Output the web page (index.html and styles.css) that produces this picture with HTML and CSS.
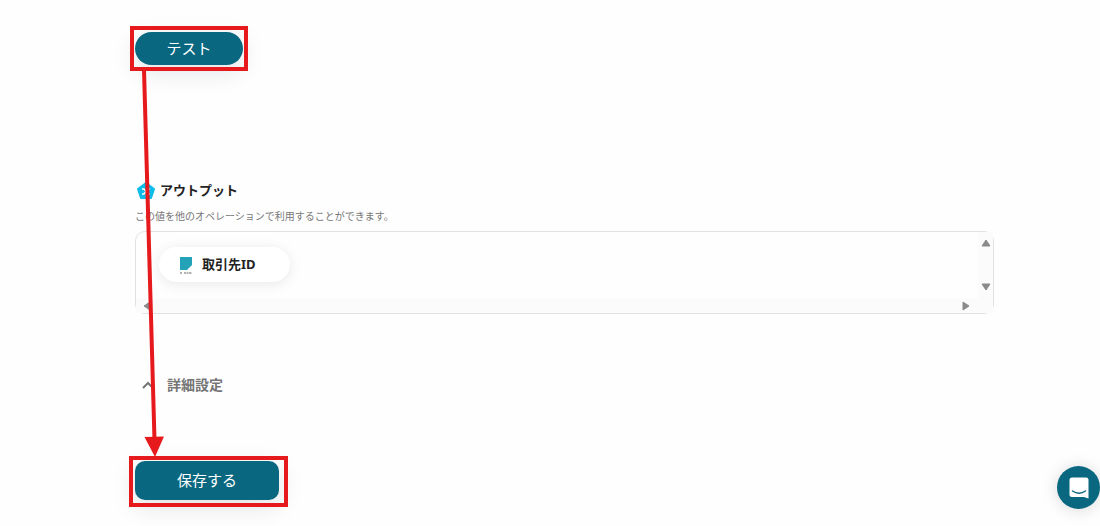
FILE: index.html
```html
<!DOCTYPE html>
<html lang="ja">
<head>
    <meta charset="UTF-8">
    <meta name="viewport" content="width=device-width, initial-scale=1.0">
    <title>オペレーション設定</title>
    <link rel="stylesheet" href="styles.css">
</head>
<body>

<main class="container">
    <button type="button" class="btn btn-test">テスト</button>

    <section class="output">
        <h2 class="output-title">
            <svg class="output-icon" viewBox="0 0 20 20" aria-hidden="true">
                <path d="M11 3 L19 9 L16 18 L6 18 L3 9 Z" fill="#0fbbe8" stroke="#0fbbe8" stroke-width="2" stroke-linejoin="round"/>
                <path d="M7 9 H9 L13 14 H15 M7 14 H9 L13 9 H15" fill="none" stroke="#fff" stroke-width="1.5"/>
            </svg>
            アウトプット
        </h2>
        <p class="output-text">この値を他のオペレーションで利用することができます。</p>
        <div class="output-box">
            <div class="output-list">
                <div class="chip">
                    <svg class="chip-icon" viewBox="0 0 14 18" aria-hidden="true">
                        <path d="M1 1 H13 V9 L8 14 H1 Z" fill="#24a3b8"/>
                        <path d="M1 17 H3 M5 17 H13" stroke="#666" stroke-dasharray="2 .5"/>
                    </svg>
                    <span class="chip-name">取引先ID</span>
                </div>
            </div>
            <div class="scroll scroll-y">
                <svg class="arrow" viewBox="0 0 10 8" aria-hidden="true"><path d="M5 1 L9 7 H1 Z"/></svg>
                <svg class="arrow" viewBox="0 0 10 8" aria-hidden="true"><path d="M1 1 H9 L5 7 Z"/></svg>
            </div>
            <div class="scroll scroll-x">
                <svg class="arrow arrow-side" viewBox="0 0 8 10" aria-hidden="true"><path d="M7 1 V9 L1 5 Z"/></svg>
                <svg class="arrow arrow-side" viewBox="0 0 8 10" aria-hidden="true"><path d="M1 1 L7 5 L1 9 Z"/></svg>
            </div>
        </div>
    </section>

    <button type="button" class="detail">
        <svg class="detail-icon" viewBox="0 0 12 8" aria-hidden="true">
            <path d="M1 7 L6 2 L11 7" fill="none" stroke="#757575" stroke-width="2"/>
        </svg>
        詳細設定
    </button>

    <button type="button" class="btn btn-save">保存する</button>
</main>

<!-- 操作手順の赤枠と矢印 -->
<svg class="guide" width="300" height="526" aria-hidden="true">
    <rect x="132" y="28" width="114" height="41"/>
    <rect x="131" y="458" width="155" height="47"/>
    <path d="M144 70 L154.5 440"/>
    <path class="guide-head" d="M144.5 437 L164 436.5 L155 457 Z"/>
</svg>

<button type="button" class="chat" aria-label="チャット">
    <svg class="chat-icon" viewBox="0 0 20 22" aria-hidden="true">
        <path d="M3 0.5 H17 Q19.5 0.5 19.5 3 V21.5 L15 20 H3 Q0.5 20 0.5 17.5 V3 Q0.5 0.5 3 0.5 Z" fill="#fff"/>
        <path d="M3.5 14 Q10 18.5 16.5 14" fill="none" stroke="#0a6780" stroke-width="1.5" stroke-linecap="round"/>
    </svg>
</button>

</body>
</html>
```
FILE: styles.css
```css
* {
    box-sizing: border-box;
}
body {
    margin: 0;
    background: #fefefe;
    color: #222;
    font-family: "Noto Sans", "Noto Sans CJK JP", sans-serif;
}
button {
    border: none;
    padding: 0;
    font-family: inherit;
    cursor: pointer;
}
.container {
    display: flex;
    flex-direction: column;
    align-items: flex-start;
    padding: 32px 106px 26px 135px;
}
.btn {
    padding-bottom: 2px;
    background: #0a6780;
    color: #fff;
    font-size: 15px;
    line-height: 20px;
    box-shadow: 0 6px 24px rgba(0, 30, 50, 0.13);
}
.btn-test {
    width: 108px;
    height: 33px;
    border-radius: 17px;
}
.btn-save {
    width: 144px;
    height: 39px;
    margin-top: 66px;
    border-radius: 10px;
}
.output {
    width: 100%;
    margin-top: 115px;
}
.output-title {
    display: flex;
    align-items: center;
    gap: 5px;
    margin: 0;
    font-size: 13px;
    line-height: 20px;
}
.output-icon {
    width: 20px;
    height: 20px;
}
.output-text {
    margin: 8px 0 7px;
    color: #777;
    font-size: 10px;
    line-height: 16px;
}
.output-box {
    display: grid;
    grid-template-columns: 1fr 15px;
    grid-template-rows: 66px 15px;
    border: 1px solid #e2e2e2;
    border-radius: 10px;
}
.output-list {
    padding: 15px 23px;
}
.chip {
    display: inline-flex;
    align-items: center;
    gap: 9px;
    height: 35px;
    padding: 0 34px 0 20px;
    border-radius: 18px;
    background: #fff;
    font-size: 13px;
    font-weight: bold;
    line-height: 20px;
    box-shadow: 0 2px 14px rgba(0, 0, 0, 0.09);
}
.chip-icon {
    width: 14px;
    height: 18px;
}
.chip-name {
    padding-bottom: 2px;
}
.scroll {
    display: flex;
    align-items: center;
    justify-content: space-between;
    background: #fbfbfb;
}
.scroll-y {
    flex-direction: column;
    padding: 7px 0;
}
.scroll-x {
    grid-column: 1 / 3;
    padding: 0 23px 0 7px;
}
.arrow {
    width: 10px;
    height: 8px;
    fill: #8a8a8a;
    stroke: #8a8a8a;
    stroke-linejoin: round;
}
.arrow-side {
    width: 8px;
    height: 10px;
}
.detail {
    display: flex;
    align-items: center;
    gap: 13px;
    margin-top: 61px;
    padding-left: 7px;
    background: none;
    color: #757575;
    font-size: 14px;
    font-weight: bold;
    line-height: 20px;
}
.detail-icon {
    width: 12px;
    height: 8px;
}
.guide {
    position: absolute;
    top: 0;
    left: 0;
    fill: none;
    stroke: #e61a1c;
    stroke-width: 4;
    pointer-events: none;
}
.guide-head {
    fill: #e61a1c;
    stroke: none;
}
.chat {
    position: fixed;
    right: 0;
    bottom: 17px;
    display: flex;
    align-items: center;
    justify-content: center;
    width: 43px;
    height: 43px;
    border-radius: 50%;
    background: #0a6780;
    box-shadow: 0 1px 16px rgba(0, 0, 0, 0.15);
}
.chat-icon {
    width: 20px;
    height: 22px;
}
```
